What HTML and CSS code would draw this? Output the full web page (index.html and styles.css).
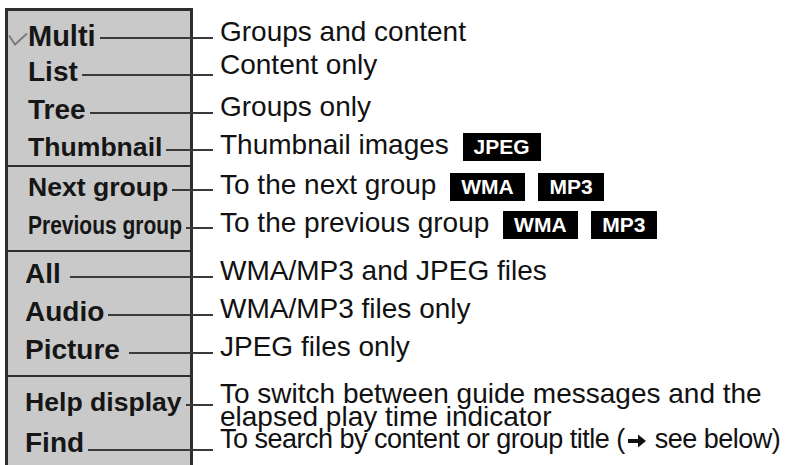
FILE: index.html
```html
<!DOCTYPE html>
<html lang="en">
<head>
<meta charset="utf-8">
<title>Display menu</title>
<link rel="stylesheet" href="styles.css">
</head>
<body>
<div class="sheet">
  <section class="grp g1">
    <div class="row">
      <div class="cell"><svg class="check" width="20" height="14" viewBox="0 0 20 14"><polyline points="1,3.5 7,12.5 19,1.5" fill="none" stroke="#7a7a7a" stroke-width="1.9"/></svg><span class="lbl big">Multi</span><span class="lead"></span></div>
      <div class="desc">Groups and content</div>
    </div>
    <div class="row">
      <div class="cell"><span class="lbl">List</span><span class="lead"></span></div>
      <div class="desc up">Content only</div>
    </div>
    <div class="row">
      <div class="cell"><span class="lbl">Tree</span><span class="lead"></span></div>
      <div class="desc">Groups only</div>
    </div>
    <div class="row">
      <div class="cell"><span class="lbl sm">Thumbnail</span><span class="lead"></span></div>
      <div class="desc">Thumbnail images <span class="badge">JPEG</span></div>
    </div>
  </section>
  <section class="grp g2">
    <div class="row">
      <div class="cell"><span class="lbl sm">Next group</span><span class="lead"></span></div>
      <div class="desc">To the next group <span class="badge">WMA</span> <span class="badge">MP3</span></div>
    </div>
    <div class="row">
      <div class="cell"><span class="lbl narrow">Previous group</span><span class="lead"></span></div>
      <div class="desc">To the previous group <span class="badge">WMA</span> <span class="badge">MP3</span></div>
    </div>
  </section>
  <section class="grp g3">
    <div class="row">
      <div class="cell"><span class="lbl">All</span><span class="lead wide"></span></div>
      <div class="desc">WMA/MP3 and JPEG files</div>
    </div>
    <div class="row">
      <div class="cell"><span class="lbl">Audio</span><span class="lead"></span></div>
      <div class="desc">WMA/MP3 files only</div>
    </div>
    <div class="row">
      <div class="cell"><span class="lbl">Picture</span><span class="lead wide"></span></div>
      <div class="desc">JPEG files only</div>
    </div>
  </section>
  <section class="grp g4">
    <div class="row tall">
      <div class="cell"><span class="lbl sm">Help display</span><span class="lead"></span></div>
      <div class="desc two">To switch between guide messages and the<br>elapsed play time indicator</div>
    </div>
    <div class="row">
      <div class="cell"><span class="lbl lift">Find</span><span class="lead"></span></div>
      <div class="desc tight">To search by content or group title (<svg class="arr" width="20" height="16" viewBox="0 0 20 16"><path d="M1 6h10V1.5L19 8l-8 6.5V10H1z" fill="#111"/></svg> see below)</div>
    </div>
  </section>
</div>
</body>
</html>
```
FILE: styles.css
```css
html, body {
  margin: 0;
  background: #ffffff;
}

body {
  font-family: "Liberation Sans", Arial, sans-serif;
  color: #111111;
  overflow: hidden;
}

.sheet {
  padding: 8px 0 0 5px;
}

.grp {
  width: 188px;
  box-sizing: border-box;
  background: #c9c9c9;
  border-style: solid;
  border-color: #2e2e2e;
  border-width: 2px 3px 0 3px;
}

.g1 {
  border-top-width: 3px;
  padding-top: 5px;
}

.g2 {
  padding: 1px 0 6px;
}

.g3 {
  padding: 3px 0 6px;
}

.g4 {
  padding-top: 6px;
}

.row {
  display: flex;
  height: 38px;
}

.g1 .row {
  height: 37.25px;
}

.row.tall {
  height: 45px;
}

.cell {
  flex: 0 0 182px;
  display: flex;
  align-items: flex-start;
  padding-left: 20px;
  box-sizing: border-box;
}

.g3 .cell,
.g4 .cell {
  padding-left: 17px;
}

.check {
  flex: none;
  margin: 16px 0 0 -20px;
}

.lbl {
  font-weight: bold;
  font-size: 28px;
  line-height: 28px;
  margin-top: 5px;
  white-space: nowrap;
  color: #161616;
}

.lbl.big {
  font-size: 29px;
  margin-top: 6px;
}

.lbl.sm {
  font-size: 26.6px;
}

.lbl.lift {
  margin-top: 1px;
}

.lbl.narrow {
  font-size: 25px;
  display: inline-block;
  transform: scaleX(0.84);
  transform-origin: left center;
  margin-right: -29px;
}

.lead {
  flex: 1 1 auto;
  height: 2px;
  background: #3a3a3a;
  margin: 21px -23px 0 4px;
}

.lead.wide {
  margin-left: 9px;
}

.desc {
  flex: 0 0 auto;
  margin-left: 30px;
  margin-top: 5px;
  font-size: 28px;
  line-height: 22px;
  white-space: nowrap;
}

.desc.up {
  margin-top: 1px;
}

.g4 .desc {
  margin-top: 0;
}

.desc.two {
  margin-top: -1px;
  line-height: 23px;
}

.desc.tight {
  font-size: 27px;
  letter-spacing: -0.5px;
}

.badge {
  display: inline-block;
  background: #000000;
  color: #ffffff;
  font-weight: bold;
  font-size: 21px;
  line-height: 28px;
  padding: 0 11px;
  margin-left: 6px;
  letter-spacing: 0;
}

.arr {
  vertical-align: -1px;
  margin: 0 1px 0 2px;
}
```
